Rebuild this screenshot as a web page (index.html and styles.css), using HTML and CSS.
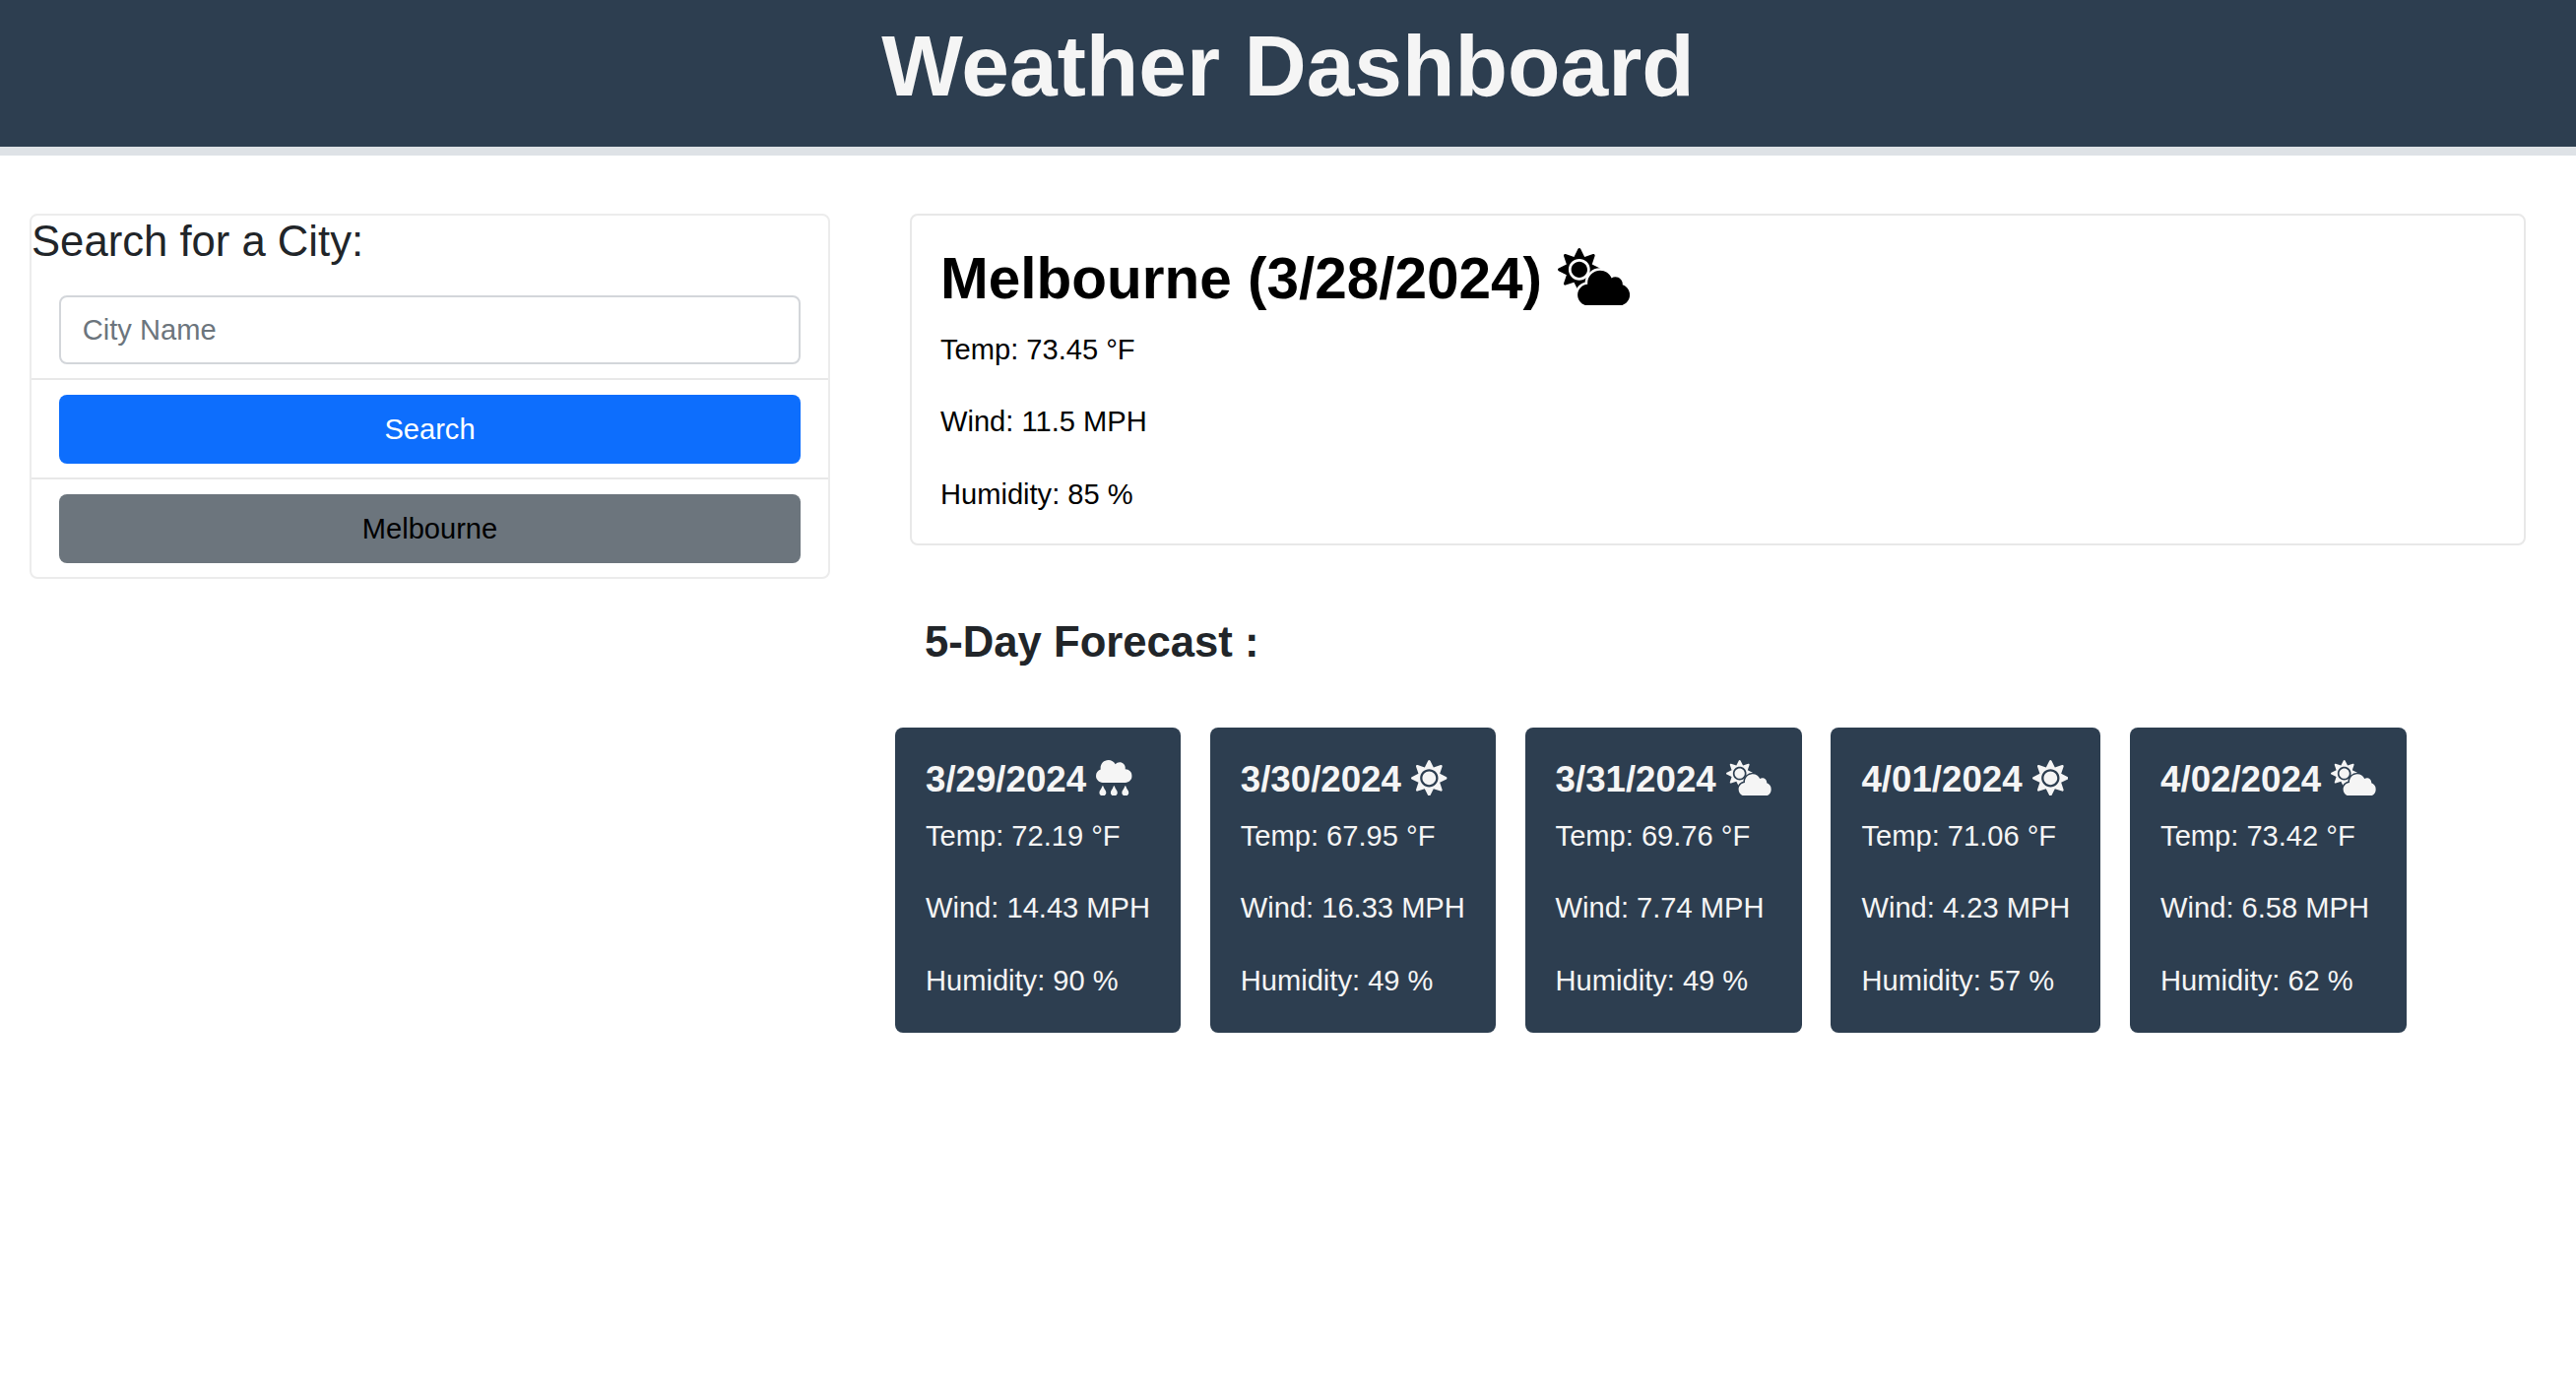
FILE: index.html
```html
<!DOCTYPE html>
<html lang="en">
<head>
    <meta charset="UTF-8">
    <meta name="viewport" content="width=device-width, initial-scale=1.0">
    <title>Weather Dashboard</title>
    <link rel="stylesheet" href="styles.css">
</head>

<body>

<!-- Weather icons, used below -->
<svg class="icon-defs" aria-hidden="true">
    <symbol id="sun" viewBox="0 0 512 512">
        <path d="M256 160c-52.9 0-96 43.1-96 96s43.1 96 96 96 96-43.1 96-96-43.1-96-96-96zm246.4 80.5l-94.7-47.3 33.5-100.4c4.5-13.6-8.4-26.5-21.9-21.9l-100.4 33.5-47.4-94.8c-6.4-12.8-24.6-12.8-31 0l-47.3 94.7L92.7 70.8c-13.6-4.5-26.5 8.4-21.9 21.9l33.5 100.4-94.7 47.4c-12.8 6.4-12.8 24.6 0 31l94.7 47.3-33.5 100.5c-4.5 13.6 8.4 26.5 21.9 21.9l100.4-33.5 47.3 94.7c6.4 12.8 24.6 12.8 31 0l47.3-94.7 100.4 33.5c13.6 4.5 26.5-8.4 21.9-21.9l-33.5-100.4 94.7-47.3c13-6.5 13-24.7.2-31.1zm-155.9 106c-49.9 49.9-131.1 49.9-181 0-49.9-49.9-49.9-131.1 0-181 49.9-49.9 131.1-49.9 181 0 49.9 49.9 49.9 131.1 0 181z"/>
    </symbol>
    <symbol id="cloud-sun" viewBox="0 0 640 512">
        <path transform="scale(0.746)" d="M256 160c-52.9 0-96 43.1-96 96s43.1 96 96 96 96-43.1 96-96-43.1-96-96-96zm246.4 80.5l-94.7-47.3 33.5-100.4c4.5-13.6-8.4-26.5-21.9-21.9l-100.4 33.5-47.4-94.8c-6.4-12.8-24.6-12.8-31 0l-47.3 94.7L92.7 70.8c-13.6-4.5-26.5 8.4-21.9 21.9l33.5 100.4-94.7 47.4c-12.8 6.4-12.8 24.6 0 31l94.7 47.3-33.5 100.5c-4.5 13.6 8.4 26.5 21.9 21.9l100.4-33.5 47.3 94.7c6.4 12.8 24.6 12.8 31 0l47.3-94.7 100.4 33.5c13.6 4.5 26.5-8.4 21.9-21.9l-33.5-100.4 94.7-47.3c13-6.5 13-24.7.2-31.1zm-155.9 106c-49.9 49.9-131.1 49.9-181 0-49.9-49.9-49.9-131.1 0-181 49.9-49.9 131.1-49.9 181 0 49.9 49.9 49.9 131.1 0 181z"/>
        <path class="cloud-gap" d="M575.2 325.7c.2-1.9.8-3.7.8-5.6 0-35.3-28.7-64-64-64-12.6 0-24.2 3.7-34.1 10-17.6-38.8-56.5-66-101.9-66-61.8 0-112 50.1-112 112 0 3 .7 5.8.9 8.7-49.6 3.7-88.9 44.7-88.9 95.3 0 53 43 96 96 96h272c53 0 96-43 96-96 0-42.5-27.7-78.2-64.8-90.3z"/>
    </symbol>
    <symbol id="cloud-rain" viewBox="0 0 512 512">
        <path d="M416 128c-.6 0-1.1.2-1.6.2 1.1-5.2 1.6-10.6 1.6-16.2 0-44.2-35.8-80-80-80-24.6 0-46.3 11.3-61 28.8C256.4 24.8 219.3 0 176 0 114.1 0 64 50.1 64 112c0 7.3.8 14.4 2.1 21.3C27.4 145.1 0 181.2 0 224c0 53 43 96 96 96h320c53 0 96-43 96-96s-43-96-96-96zM88 374.2c-12.8 44.4-40 56.4-40 87.7 0 27.7 21.5 50.1 48 50.1s48-22.4 48-50.1c0-31.4-27.2-43.1-40-87.7-2.2-8.1-13.5-8.5-16 0zm160 0c-12.8 44.4-40 56.4-40 87.7 0 27.7 21.5 50.1 48 50.1s48-22.4 48-50.1c0-31.4-27.2-43.1-40-87.7-2.2-8.1-13.5-8.5-16 0zm160 0c-12.8 44.4-40 56.4-40 87.7 0 27.7 21.5 50.1 48 50.1s48-22.4 48-50.1c0-31.4-27.2-43.1-40-87.7-2.2-8.1-13.5-8.5-16 0z"/>
    </symbol>
</svg>

<!-- Header -->
<header class="page-header">
    <h1>Weather Dashboard</h1>
</header>

<div class="page-body">

    <!-- Search column -->
    <aside class="search-card">
        <h3>Search for a City:</h3>
        <ul class="search-list">
            <li><input type="text" class="city-input" placeholder="City Name"></li>
            <li><button type="button" class="btn btn-search">Search</button></li>
            <li><button type="button" class="btn btn-history">Melbourne</button></li>
        </ul>
    </aside>

    <main class="weather">
        <!-- Today -->
        <section class="today-card">
            <h2>Melbourne (3/28/2024) <svg class="icon icon-wide"><use href="#cloud-sun"/></svg></h2>
            <p>Temp: 73.45 °F</p>
            <p>Wind: 11.5 MPH</p>
            <p>Humidity: 85 %</p>
        </section>

        <h3 class="forecast-title">5-Day Forecast :</h3>

        <!-- Forecast cards -->
        <section class="forecast">
            <div class="day-card">
                <h5>3/29/2024 <svg class="icon"><use href="#cloud-rain"/></svg></h5>
                <p>Temp: 72.19 °F</p>
                <p>Wind: 14.43 MPH</p>
                <p>Humidity: 90 %</p>
            </div>
            <div class="day-card">
                <h5>3/30/2024 <svg class="icon"><use href="#sun"/></svg></h5>
                <p>Temp: 67.95 °F</p>
                <p>Wind: 16.33 MPH</p>
                <p>Humidity: 49 %</p>
            </div>
            <div class="day-card">
                <h5>3/31/2024 <svg class="icon icon-wide"><use href="#cloud-sun"/></svg></h5>
                <p>Temp: 69.76 °F</p>
                <p>Wind: 7.74 MPH</p>
                <p>Humidity: 49 %</p>
            </div>
            <div class="day-card">
                <h5>4/01/2024 <svg class="icon"><use href="#sun"/></svg></h5>
                <p>Temp: 71.06 °F</p>
                <p>Wind: 4.23 MPH</p>
                <p>Humidity: 57 %</p>
            </div>
            <div class="day-card">
                <h5>4/02/2024 <svg class="icon icon-wide"><use href="#cloud-sun"/></svg></h5>
                <p>Temp: 73.42 °F</p>
                <p>Wind: 6.58 MPH</p>
                <p>Humidity: 62 %</p>
            </div>
        </section>
    </main>

</div>

</body>
</html>
```

FILE: styles.css
```css
html {
    font-size: 29.1px;
}
body {
    font-family: "Liberation Sans", Arial, sans-serif;
    font-size: 1rem;
    line-height: 1.5;
    margin: 0;
    padding: 0;
    color: #212529;
    background-color: #fff;
}
h1, h2, h3, h5, p, ul {
    margin: 0;
    padding: 0;
}
.icon-defs {
    display: none;
}
.icon {
    width: 1em;
    height: 1em;
    fill: currentColor;
    vertical-align: -0.125em;
    --gap: #fff;
}
.icon-wide {
    width: 1.25em;
}
.cloud-gap {
    stroke: var(--gap);
    stroke-width: 44px;
    paint-order: stroke;
}

.page-header {
    background-color: #2d3e50;
    border-bottom: 9px solid #dee2e6;
    text-align: center;
    color: #f5f5f5;
    height: 149px;
}
.page-header h1 {
    font-size: 3.01rem;
    font-weight: bold;
    line-height: 1.2;
    padding-top: 15px;
}

.page-body {
    display: flex;
    align-items: flex-start;
    padding: 59px 51px 0 30px;
}

.search-card {
    width: 813px;
    flex: none;
    box-sizing: border-box;
    border: 2px solid #ececec;
    border-radius: 8px;
}
.search-card h3 {
    font-size: 1.5rem;
    font-weight: normal;
    line-height: 1.2;
    margin-bottom: 14px;
}
.search-list {
    list-style: none;
}
.search-list li {
    padding: 15px 28px 14px;
    border-bottom: 2px solid #e8e8e8;
}
.search-list li:last-child {
    border-bottom: none;
    padding-bottom: 14px;
}
.city-input {
    display: block;
    width: 100%;
    box-sizing: border-box;
    height: 70px;
    padding: 0 0.75rem;
    font-family: inherit;
    font-size: 1rem;
    color: #212529;
    border: 2px solid #d3d6da;
    border-radius: 8px;
    background: #fff;
    outline: none;
}
.city-input::placeholder {
    color: #6c757d;
}
.btn {
    display: block;
    width: 100%;
    height: 70px;
    font-family: inherit;
    font-size: 1rem;
    border: none;
    border-radius: 8px;
    cursor: pointer;
}
.btn-search {
    background-color: #0d6efd;
    color: #fff;
}
.btn-history {
    background-color: #6c757d;
    color: #000;
}

.weather {
    flex: 1;
    margin-left: 66px;
}
.today-card {
    margin-left: 15px;
    padding: 29px 29px 0;
    border: 2px solid #e8e8e8;
    border-radius: 8px;
    color: #000;
}
.today-card h2 {
    font-size: 2.01rem;
    font-weight: bold;
    line-height: 1.2;
    margin-bottom: 16px;
}
.today-card p, .day-card p {
    margin-bottom: 29.6px;
}
.today-card p:last-child {
    margin-bottom: 28px;
}
.forecast-title {
    font-size: 1.5rem;
    font-weight: bold;
    line-height: 1.2;
    margin: 72px 0 60px 30px;
}

.forecast {
    display: flex;
    gap: 29.8px;
}
.day-card {
    padding: 31px 31px 0;
    background-color: #2d3e50;
    color: #f5f5f5;
    border-radius: 8px;
}
.day-card p:last-child {
    margin-bottom: 31px;
}
.day-card h5 {
    font-size: 1.26rem;
    font-weight: bold;
    line-height: 1.2;
    margin-bottom: 0.5rem;
}
.day-card .icon {
    --gap: #2d3e50;
}
```
